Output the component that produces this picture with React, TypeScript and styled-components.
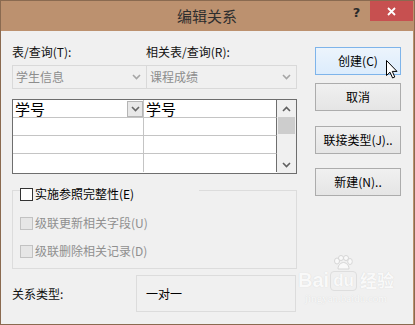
import React from 'react';
import styled, { createGlobalStyle } from 'styled-components';

const Global = createGlobalStyle`
  * { box-sizing: border-box; }
  html, body { margin: 0; padding: 0; background: #ffffff; }
  body { font-family: "Noto Sans CJK SC", "Microsoft YaHei", sans-serif; }
`;

const Window = styled.div`
  position: relative;
  width: 415px;
  height: 325px;
  border: 1px solid #8a6a50;
  background: #bc916f;
  display: flex;
  flex-direction: column;
  overflow: hidden;
`;

const TitleBar = styled.div`
  height: 30px;
  display: grid;
  grid-template-columns: 1fr auto 1fr;
  align-items: start;
  padding-right: 1px;
`;

const Title = styled.div`
  grid-column: 2;
  font-size: 15px;
  line-height: 30px;
  color: #2e2e2e;
`;

const Controls = styled.div`
  grid-column: 3;
  justify-self: end;
  display: flex;
  align-items: flex-start;
`;

const Help = styled.div`
  width: 27px;
  height: 21px;
  font-family: "DejaVu Sans", "Liberation Sans", sans-serif;
  font-weight: bold;
  font-size: 13px;
  line-height: 23px;
  text-align: center;
  color: #2a2a2a;
`;

const Close = styled.div`
  width: 43px;
  height: 20px;
  background: #c75050;
  display: flex;
  align-items: center;
  justify-content: center;
  padding-top: 1px;
`;

const Body = styled.div`
  flex: 1;
  margin-right: 1px;
  background: #f0f0f0;
  display: grid;
  grid-template-columns: 285px 86px;
  column-gap: 18px;
  padding-left: 11px;
  color: #000;
  font-size: 12px;
`;

const LeftCol = styled.div`
  display: flex;
  flex-direction: column;
  padding-top: 13px;
`;

const LabelRow = styled.div`
  display: grid;
  grid-template-columns: 134px 1fr;
  line-height: 16px;
  height: 16px;
`;

const Label = styled.span`
  color: #111;
  white-space: nowrap;
`;

const ComboRow = styled.div`
  display: grid;
  grid-template-columns: 135px 150px;
  margin-top: 5px;
  height: 24px;
`;

const Combo = styled.div<{ $joined?: boolean }>`
  border: 1px solid #d9d9d9;
  border-left: ${p => (p.$joined ? 'none' : '1px solid #d9d9d9')};
  display: flex;
  align-items: center;
  justify-content: space-between;
  padding: 0 5px 0 3px;
  color: #8d8d8d;
  line-height: 22px;
`;

const Table = styled.div`
  margin-top: 10px;
  height: 75px;
  border: 1px solid #6e6e6e;
  display: flex;
`;

const Cells = styled.div`
  display: grid;
  grid-template-columns: 131px 133px;
  grid-auto-rows: 18px;
  background: #fff;
`;

const Cell = styled.div<{ $last?: boolean; $edge?: boolean }>`
  border-right: 1px solid ${p => (p.$edge ? '#6e6e6e' : '#c4c4c4')};
  border-bottom: ${p => (p.$last ? 'none' : '1px solid #c4c4c4')};
  display: flex;
  align-items: center;
  justify-content: space-between;
  padding-left: 2px;
  font-size: 15px;
  line-height: 17px;
  color: #000;
  background: #fff;
`;

const MiniDrop = styled.div`
  width: 16px;
  height: 16px;
  border: 1px solid #b5b5b5;
  background: #e8e8e8;
  display: flex;
  align-items: center;
  justify-content: center;
`;

const Scroll = styled.div`
  flex: 1;
  background: #f0f0f0;
  display: flex;
  flex-direction: column;
`;

const ScrollArrow = styled.div`
  height: 17px;
  display: flex;
  align-items: center;
  justify-content: center;
`;

const Thumb = styled.div`
  height: 17px;
  margin: 0 1px;
  background: #cdcdcd;
`;

const ScrollTrack = styled.div`
  flex: 1;
`;

const GroupBox = styled.div`
  margin-top: 16px;
  height: 79px;
  border: 1px solid #dcdcdc;
  display: flex;
  flex-direction: column;
  padding-bottom: 9px;
`;

const CheckRow = styled.div<{ $disabled?: boolean; $legend?: boolean; $gap?: number }>`
  display: flex;
  align-items: center;
  gap: 2px;
  height: 16px;
  margin-left: 7px;
  margin-top: ${p => p.$gap ?? 0}px;
  align-self: flex-start;
  padding-right: ${p => (p.$legend ? '65px' : '0')};
  background: #f0f0f0;
  color: ${p => (p.$disabled ? '#8f8f8f' : '#000')};
  line-height: 16px;
  white-space: nowrap;
`;

const Box = styled.span<{ $disabled?: boolean }>`
  width: 13px;
  height: 13px;
  border: 1px solid ${p => (p.$disabled ? '#c2c2c2' : '#333')};
  background: ${p => (p.$disabled ? '#e6e6e6' : '#fff')};
  flex: none;
`;

const RelRow = styled.div`
  margin-top: 6px;
  display: grid;
  grid-template-columns: 124px 160px;
  align-items: center;
`;

const RelBox = styled.div`
  height: 37px;
  border: 1px solid #dcdcdc;
  display: flex;
  align-items: center;
  padding-left: 9px;
  color: #000;
`;

const RightCol = styled.div`
  display: flex;
  flex-direction: column;
  padding-top: 16px;
`;

const Button = styled.div<{ $hot?: boolean; $gap?: number }>`
  position: relative;
  height: 28px;
  margin-top: ${p => p.$gap ?? 0}px;
  border: 1px solid ${p => (p.$hot ? '#7eb4ea' : '#acacac')};
  background: ${p =>
    p.$hot
      ? 'linear-gradient(#ecf4fc, #dcecfc)'
      : 'linear-gradient(#f0f0f0, #e5e5e5)'};
  display: flex;
  align-items: center;
  justify-content: center;
  color: #000;
  line-height: 16px;
  white-space: nowrap;
`;

const Cursor = styled.svg`
  position: absolute;
  left: 70px;
  top: 12px;
`;

const Watermark = styled.div`
  position: absolute;
  left: 297px;
  top: 268px;
  display: flex;
  flex-direction: column;
  align-items: center;
  color: #f9f9f9;
  text-shadow: 0 0 1px #d2d2d2;
  pointer-events: none;
`;

const WmMain = styled.div`
  display: flex;
  align-items: flex-end;
  font-family: "Liberation Sans", Arial, sans-serif;
  font-weight: bold;
  font-size: 20px;
  line-height: 22px;
`;

const WmDu = styled.span`
  position: relative;
  font-size: 17px;
  padding: 0 2px;
  border: 1px solid #dedede;
  border-radius: 4px;
  line-height: 18px;
  margin-left: 1px;
`;

const Paw = styled.svg`
  position: absolute;
  left: 2px;
  top: -17px;
`;

const WmCn = styled.span`
  font-family: "Noto Sans CJK SC", sans-serif;
  font-weight: bold;
  font-size: 17px;
  margin-left: 3px;
`;

const WmSub = styled.div`
  font-family: "Liberation Serif", serif;
  font-size: 11px;
  line-height: 12px;
  margin-top: 1px;
`;

const Chevron = ({ color = '#a6a6a6', up = false }: { color?: string; up?: boolean }) => (
  <svg width="9" height="6" viewBox="0 0 9 6">
    <path
      d={up ? 'M1 5 L4.5 1.5 L8 5' : 'M1 1 L4.5 4.5 L8 1'}
      fill="none"
      stroke={color}
      strokeWidth="1.6"
    />
  </svg>
);

export default function App() {
  const rows = [0, 1, 2, 3];
  return (
    <>
      <Global />
      <Window>
        <TitleBar>
          <Title>编辑关系</Title>
          <Controls>
            <Help>?</Help>
            <Close>
              <svg width="9" height="9" viewBox="0 0 9 9">
                <path d="M1 1 L8 8 M8 1 L1 8" stroke="#fff" strokeWidth="1.8" />
              </svg>
            </Close>
          </Controls>
        </TitleBar>
        <Body>
          <LeftCol>
            <LabelRow>
              <Label>表/查询(T):</Label>
              <Label>相关表/查询(R):</Label>
            </LabelRow>
            <ComboRow>
              <Combo>
                <span>学生信息</span>
                <Chevron />
              </Combo>
              <Combo $joined>
                <span>课程成绩</span>
                <Chevron />
              </Combo>
            </ComboRow>
            <Table>
              <Cells>
                {rows.map(r => (
                  <React.Fragment key={r}>
                    <Cell $last={r === 3}>
                      <span>{r === 0 ? '学号' : ''}</span>
                      {r === 0 && (
                        <MiniDrop>
                          <Chevron color="#666" />
                        </MiniDrop>
                      )}
                    </Cell>
                    <Cell $last={r === 3} $edge>
                      <span>{r === 0 ? '学号' : ''}</span>
                    </Cell>
                  </React.Fragment>
                ))}
              </Cells>
              <Scroll>
                <ScrollArrow>
                  <Chevron color="#606060" up />
                </ScrollArrow>
                <Thumb />
                <ScrollTrack />
                <ScrollArrow>
                  <Chevron color="#606060" />
                </ScrollArrow>
              </Scroll>
            </Table>
            <GroupBox>
              <CheckRow $legend style={{ marginTop: -5 }}>
                <Box />
                <span>实施参照完整性(E)</span>
              </CheckRow>
              <CheckRow $disabled $gap={13}>
                <Box $disabled />
                <span>级联更新相关字段(U)</span>
              </CheckRow>
              <CheckRow $disabled $gap={12}>
                <Box $disabled />
                <span>级联删除相关记录(D)</span>
              </CheckRow>
            </GroupBox>
            <RelRow>
              <Label>关系类型:</Label>
              <RelBox>一对一</RelBox>
            </RelRow>
          </LeftCol>
          <RightCol>
            <Button $hot>
              创建(C)
              <Cursor width="13" height="19" viewBox="0 0 13 19">
                <path
                  d="M0.5 0.5 L0.5 15.5 L4 12.2 L6.6 18 L8.8 17 L6.3 11.4 L11 11.4 Z"
                  fill="#fff"
                  stroke="#000"
                  strokeWidth="1"
                  strokeLinejoin="miter"
                />
              </Cursor>
            </Button>
            <Button $gap={8}>取消</Button>
            <Button $gap={15}>联接类型(J)..</Button>
            <Button $gap={14}>新建(N)..</Button>
          </RightCol>
        </Body>
        <Watermark>
          <WmMain>
            Bai
            <WmDu>
              <Paw width="20" height="16" viewBox="0 0 20 16">
                <g fill="#f9f9f9" stroke="#d6d6d6" strokeWidth="1">
                  <ellipse cx="4" cy="6" rx="2.5" ry="3" />
                  <ellipse cx="8" cy="3" rx="2.5" ry="2.5" />
                  <ellipse cx="13" cy="3" rx="2.5" ry="2.5" />
                  <ellipse cx="17" cy="6.5" rx="2.3" ry="3" />
                  <path d="M5 14 C5 9 9 7.5 10.5 7.5 C12 7.5 16 9 16 14 Z" />
                </g>
              </Paw>
              du
            </WmDu>
            <WmCn>经验</WmCn>
          </WmMain>
          <WmSub>jingyan.baidu.com</WmSub>
        </Watermark>
      </Window>
    </>
  );
}
